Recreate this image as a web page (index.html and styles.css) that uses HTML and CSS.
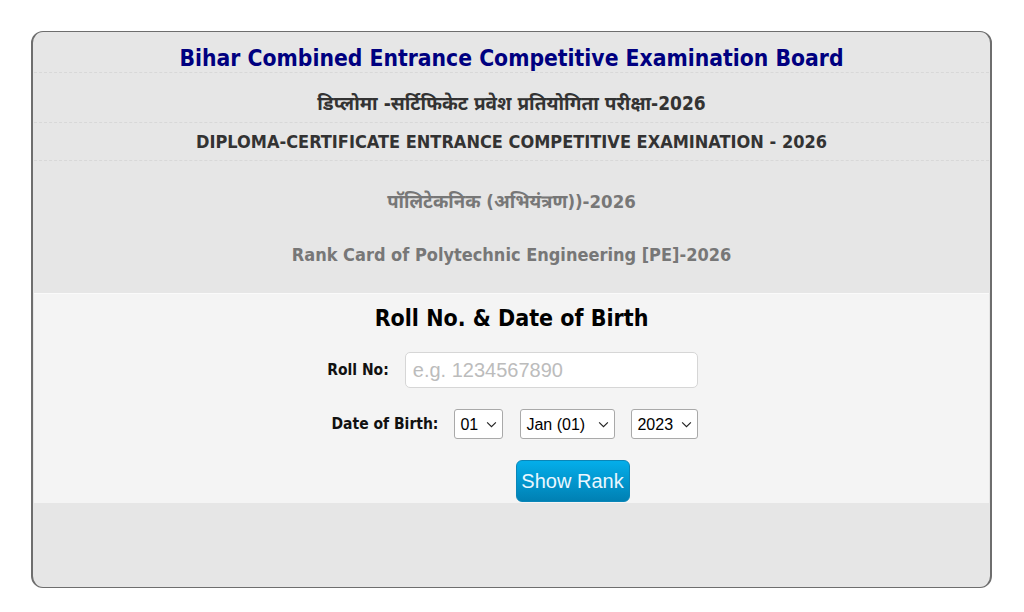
FILE: index.html
```html
<!DOCTYPE html>
<html lang="hi">
<head>
  <meta charset="UTF-8" />
  <meta name="viewport" content="width=device-width, initial-scale=1.0"/>
  <title>Rank Card - Polytechnic Engineering 2026</title>
  <link rel="stylesheet" href="styles.css">
</head>
<body>

  <div class="card">
    <div class="row title">Bihar Combined Entrance Competitive Examination Board</div>
    <div class="row hindi">डिप्लोमा -सर्टिफिकेट प्रवेश प्रतियोगिता परीक्षा-2026</div>
    <div class="row english">DIPLOMA-CERTIFICATE ENTRANCE COMPETITIVE EXAMINATION - 2026</div>

    <div class="sub">
      <div class="sub-line">पॉलिटेकनिक (अभियंत्रण))-2026</div>
      <div class="sub-line">Rank Card of Polytechnic Engineering [PE]-2026</div>
    </div>

    <form class="panel" id="rankForm">
      <h2>Roll No. &amp; Date of Birth</h2>

      <div class="field">
        <label for="roll">Roll No:</label>
        <input type="text" id="roll" placeholder="e.g. 1234567890">
      </div>

      <div class="field dob">
        <label for="day">Date of Birth:</label>
        <span class="pick day">
          <select id="day">
            <option>01</option><option>02</option><option>03</option>
          </select>
          <svg viewBox="0 0 12 8"><path d="M1 1.5l5 5 5-5"/></svg>
        </span>
        <span class="pick month">
          <select id="month">
            <option>Jan (01)</option><option>Feb (02)</option><option>Mar (03)</option>
          </select>
          <svg viewBox="0 0 12 8"><path d="M1 1.5l5 5 5-5"/></svg>
        </span>
        <span class="pick year">
          <select id="year">
            <option>2023</option><option>2022</option><option>2021</option>
          </select>
          <svg viewBox="0 0 12 8"><path d="M1 1.5l5 5 5-5"/></svg>
        </span>
      </div>

      <div class="actions">
        <button type="submit">Show Rank</button>
      </div>
    </form>
  </div>

</body>
</html>
```

FILE: styles.css
```css
* {
  box-sizing: border-box;
}

body {
  margin: 0;
  background: #fff;
  font-family: "DejaVu Sans Condensed", "DejaVu Sans", "Noto Sans Devanagari", "Noto Sans", sans-serif;
}

.card {
  width: 961px;
  height: 557px;
  margin: 31px 0 0 31px;
  background: #e6e6e6;
  border: 1px solid #6e6e6e;
  border-left-width: 2px;
  border-right-width: 2px;
  border-radius: 12px;
  padding: 0 1px;
}

.row {
  text-align: center;
  font-weight: bold;
  border-bottom: 1px dashed #d8d8d8;
}

.title {
  height: 41px;
  padding-top: 13px;
  font-size: 22.7px;
  color: #000080;
}

.hindi {
  height: 50px;
  padding-top: 19px;
  font-size: 19px;
  color: #333;
}

.english {
  height: 38px;
  padding-top: 8px;
  font-size: 18px;
  color: #333;
}

.sub {
  height: 132px;
  padding-top: 30px;
  text-align: center;
  font-size: 18px;
  font-weight: bold;
  color: #777;
}

.sub-line {
  height: 26px;
  margin-bottom: 27px;
}

.sub-line:first-child {
  font-size: 18.5px;
}

.panel {
  height: 210px;
  background: #f4f4f4;
  border-top: 1px solid #fafafa;
  display: flex;
  flex-direction: column;
  align-items: center;
  padding-top: 11px;
}

.panel h2 {
  margin: 0 0 21px;
  font-size: 23px;
  color: #000;
}

.field {
  display: flex;
  align-items: center;
  gap: 16px;
  margin-left: 2px;
}

.field label {
  font-size: 15.5px;
  font-weight: bold;
  color: #111;
}

.field input {
  width: 293px;
  height: 36px;
  border: 1px solid #d6d6d6;
  border-radius: 5px;
  padding: 0 7px;
  font-family: "Liberation Sans", Arial, sans-serif;
  font-size: 20px;
  background: #fff;
}

.field input::placeholder {
  color: #bcbcbc;
}

.dob {
  margin-top: 21px;
  gap: 0;
  margin-left: 7px;
}

.dob label {
  margin-right: 16px;
}

.pick {
  position: relative;
  display: inline-block;
}

.pick select {
  appearance: none;
  -webkit-appearance: none;
  height: 30px;
  border: 1px solid #a9a9a9;
  border-radius: 3px;
  background: #fff;
  font-family: "Liberation Sans", Arial, sans-serif;
  font-size: 16px;
  color: #000;
  padding: 0 0 0 5px;
}

.pick svg {
  position: absolute;
  right: 6px;
  top: 12px;
  width: 11px;
  height: 7px;
  fill: none;
  stroke: #222;
  stroke-width: 1.3;
  pointer-events: none;
}

.day select { width: 49px; }
.month { margin-left: 17px; }
.month select { width: 95px; }
.year { margin-left: 16px; }
.year select { width: 67px; }

.actions {
  margin-top: 21px;
  margin-left: 122px;
}

.actions button {
  width: 114px;
  height: 42px;
  padding: 0;
  white-space: nowrap;
  border: 1px solid #0a86b8;
  border-radius: 6px;
  background: linear-gradient(#04aeea, #0080b3);
  color: #eaf7ff;
  font-family: "Liberation Sans", Arial, sans-serif;
  font-size: 20px;
  cursor: pointer;
}
```
